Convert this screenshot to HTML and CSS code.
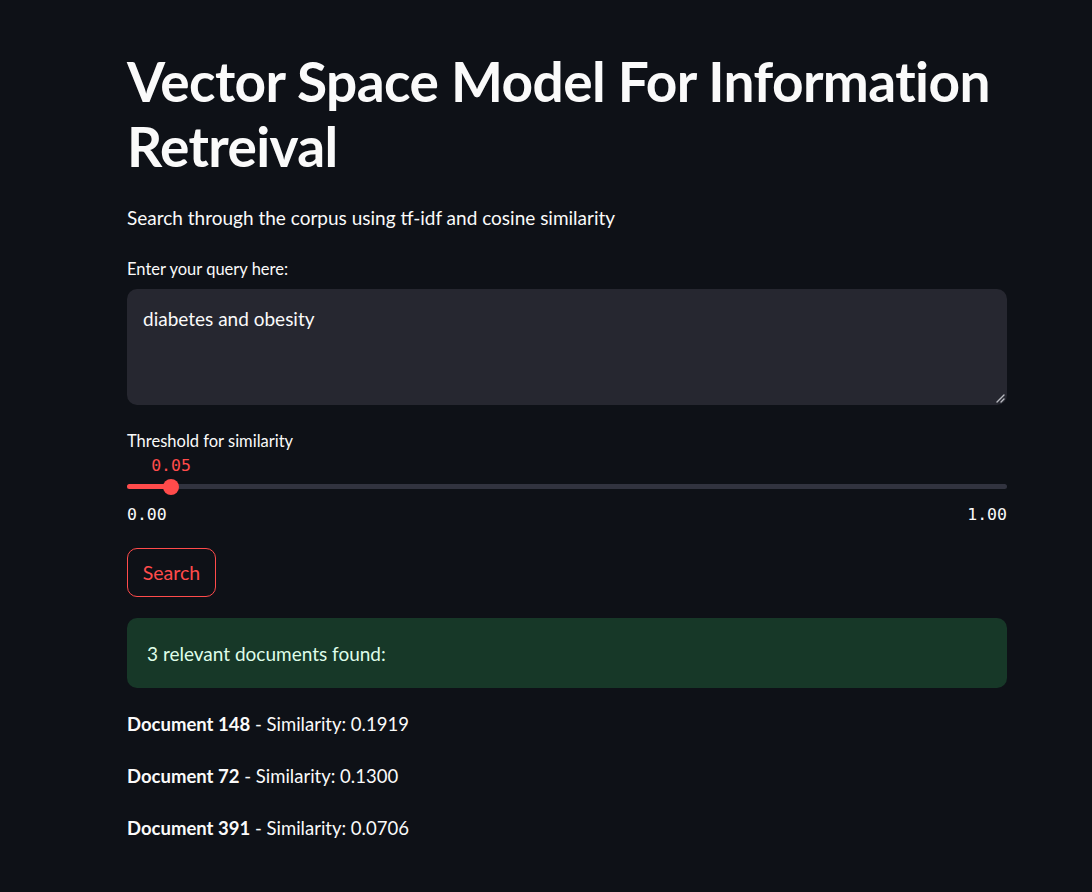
FILE: index.html
```html
<!DOCTYPE html>
<html lang="en">
<head>
<meta charset="utf-8">
<title>Vector Space Model For Information Retreival</title>
<link rel="stylesheet" href="styles.css">
</head>
<body>
<main class="main">
  <h1 class="title">Vector Space Model For Information Retreival</h1>
  <p class="subtitle">Search through the corpus using tf-idf and cosine similarity</p>

  <div class="field">
    <label class="label">Enter your query here:</label>
    <div class="textarea">diabetes and obesity
      <svg class="grip" width="10" height="10" viewBox="0 0 10 10"><path d="M9 2 L2 9 M9 6 L6 9" stroke="#b9bac0" stroke-width="1.4" stroke-linecap="round"/></svg>
    </div>
  </div>

  <div class="field slider-field">
    <label class="label">Threshold for similarity</label>
    <div class="slider">
      <div class="slider-value-row">
        <span class="slider-value" style="left:5%">0.05</span>
      </div>
      <div class="track">
        <div class="fill" style="width:5%"></div>
        <div class="thumb" style="left:5%"></div>
      </div>
      <div class="ticks"><span>0.00</span><span>1.00</span></div>
    </div>
  </div>

  <button class="btn">Search</button>

  <div class="success">3 relevant documents found:</div>

  <div class="results">
    <p class="doc"><strong>Document 148</strong> - Similarity: 0.1919</p>
    <p class="doc"><strong>Document 72</strong> - Similarity: 0.1300</p>
    <p class="doc"><strong>Document 391</strong> - Similarity: 0.0706</p>
  </div>
</main>
</body>
</html>
```

FILE: styles.css
```css
* { box-sizing: border-box; }
html, body {
  margin: 0;
  padding: 0;
  background: #0e1117;
  color: #fafafa;
  font-family: "Lato", "Noto Sans", sans-serif;
}
.main {
  width: 880px;
  margin-left: 127px;
  display: flex;
  flex-direction: column;
}
.title {
  margin: 49px 0 0 0;
  font-size: 55px;
  line-height: 65px;
  font-weight: 700;
  letter-spacing: -0.6px;
}
.subtitle {
  margin: 23px 0 0 0;
  font-size: 19px;
  line-height: 32px;
}
.field {
  display: flex;
  flex-direction: column;
}
.label {
  font-size: 16.5px;
  line-height: 28px;
  margin-top: 21px;
  margin-bottom: 6px;
}
.textarea {
  position: relative;
  height: 116px;
  background: #262730;
  border-radius: 10px;
  padding: 14px 16px;
  font-size: 19px;
  line-height: 32px;
}
.grip {
  position: absolute;
  right: 2px;
  bottom: 2px;
}
.slider-field .label {
  margin-top: 22px;
  margin-bottom: 0;
}
.slider { display: flex; flex-direction: column; }
.slider-value-row {
  position: relative;
  height: 27px;
}
.slider-value {
  position: absolute;
  top: 0;
  transform: translateX(-50%);
  font-family: "DejaVu Sans Mono", "Liberation Mono", monospace;
  font-size: 16.5px;
  color: #ff4b4b;
  line-height: 22px;
}
.track {
  position: relative;
  height: 5px;
  background: #31333f;
  border-radius: 3px;
  margin-top: 2px;
}
.fill {
  height: 100%;
  background: #ff4b4b;
  border-radius: 3px 0 0 3px;
}
.thumb {
  position: absolute;
  top: 50%;
  width: 16px;
  height: 16px;
  margin: -8px 0 0 -8px;
  background: #ff4b4b;
  border-radius: 50%;
}
.ticks {
  display: flex;
  justify-content: space-between;
  font-family: "DejaVu Sans Mono", "Liberation Mono", monospace;
  font-size: 16.5px;
  line-height: 22px;
  margin-top: 15px;
  color: #fafafa;
}
.btn {
  align-self: flex-start;
  margin-top: 22px;
  width: 89px;
  height: 49px;
  background: #0e1117;
  border: 1px solid #ff4b4b;
  border-radius: 10px;
  color: #ff4b4b;
  font-family: "Lato", "Noto Sans", sans-serif;
  font-size: 19.5px;
  padding: 0;
}
.success {
  margin-top: 21px;
  height: 70px;
  background: #173828;
  color: #dffde9;
  border-radius: 10px;
  padding: 0 20px;
  display: flex;
  align-items: center;
  font-size: 19px;
}
.results { margin-top: 20px; }
.doc {
  margin: 0 0 20px 0;
  font-size: 18.5px;
  line-height: 32px;
}
.doc strong { font-weight: 700; }
```
